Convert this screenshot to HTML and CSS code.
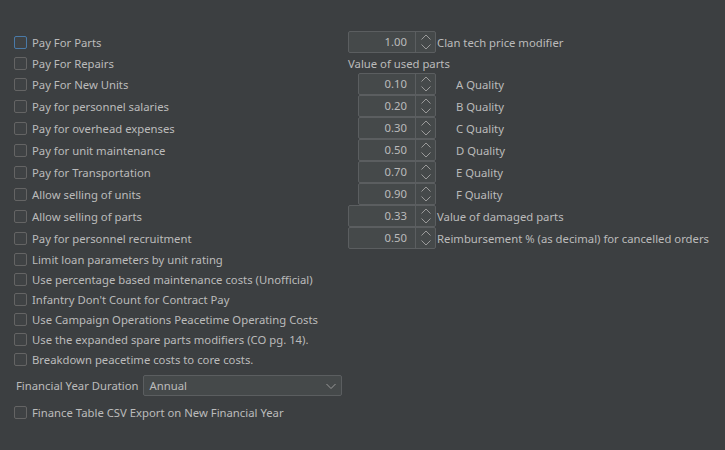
FILE: index.html
```html
<!DOCTYPE html>
<html>
<head>
<meta charset="utf-8">
<link rel="stylesheet" href="styles.css">
</head>
<body>
<div class="panel">
  <div class="grid">
    <label class="check"><span class="box focus"></span>Pay For Parts</label>
    <div class="spin main"><span class="val">1.00</span><span class="btn"><svg width="20" height="22" viewBox="0 0 20 22"><path d="M5.5 8.5 L10 4 L14.5 8.5 M5.5 13.5 L10 18 L14.5 13.5" fill="none" stroke="#9a9a9a" stroke-width="1"/></svg></span></div>
    <div class="lbl">Clan tech price modifier</div>

    <label class="check"><span class="box"></span>Pay For Repairs</label>
    <div class="lbl section">Value of used parts</div>

    <label class="check"><span class="box"></span>Pay For New Units</label>
    <div class="spin sub"><span class="val">0.10</span><span class="btn"><svg width="20" height="22" viewBox="0 0 20 22"><path d="M5.5 8.5 L10 4 L14.5 8.5 M5.5 13.5 L10 18 L14.5 13.5" fill="none" stroke="#9a9a9a" stroke-width="1"/></svg></span></div>
    <div class="lbl q">A Quality</div>

    <label class="check"><span class="box"></span>Pay for personnel salaries</label>
    <div class="spin sub"><span class="val">0.20</span><span class="btn"><svg width="20" height="22" viewBox="0 0 20 22"><path d="M5.5 8.5 L10 4 L14.5 8.5 M5.5 13.5 L10 18 L14.5 13.5" fill="none" stroke="#9a9a9a" stroke-width="1"/></svg></span></div>
    <div class="lbl q">B Quality</div>

    <label class="check"><span class="box"></span>Pay for overhead expenses</label>
    <div class="spin sub"><span class="val">0.30</span><span class="btn"><svg width="20" height="22" viewBox="0 0 20 22"><path d="M5.5 8.5 L10 4 L14.5 8.5 M5.5 13.5 L10 18 L14.5 13.5" fill="none" stroke="#9a9a9a" stroke-width="1"/></svg></span></div>
    <div class="lbl q">C Quality</div>

    <label class="check"><span class="box"></span>Pay for unit maintenance</label>
    <div class="spin sub"><span class="val">0.50</span><span class="btn"><svg width="20" height="22" viewBox="0 0 20 22"><path d="M5.5 8.5 L10 4 L14.5 8.5 M5.5 13.5 L10 18 L14.5 13.5" fill="none" stroke="#9a9a9a" stroke-width="1"/></svg></span></div>
    <div class="lbl q">D Quality</div>

    <label class="check"><span class="box"></span>Pay for Transportation</label>
    <div class="spin sub"><span class="val">0.70</span><span class="btn"><svg width="20" height="22" viewBox="0 0 20 22"><path d="M5.5 8.5 L10 4 L14.5 8.5 M5.5 13.5 L10 18 L14.5 13.5" fill="none" stroke="#9a9a9a" stroke-width="1"/></svg></span></div>
    <div class="lbl q">E Quality</div>

    <label class="check"><span class="box"></span>Allow selling of units</label>
    <div class="spin sub"><span class="val">0.90</span><span class="btn"><svg width="20" height="22" viewBox="0 0 20 22"><path d="M5.5 8.5 L10 4 L14.5 8.5 M5.5 13.5 L10 18 L14.5 13.5" fill="none" stroke="#9a9a9a" stroke-width="1"/></svg></span></div>
    <div class="lbl q">F Quality</div>

    <label class="check"><span class="box"></span>Allow selling of parts</label>
    <div class="spin main"><span class="val">0.33</span><span class="btn"><svg width="20" height="22" viewBox="0 0 20 22"><path d="M5.5 8.5 L10 4 L14.5 8.5 M5.5 13.5 L10 18 L14.5 13.5" fill="none" stroke="#9a9a9a" stroke-width="1"/></svg></span></div>
    <div class="lbl">Value of damaged parts</div>

    <label class="check"><span class="box"></span>Pay for personnel recruitment</label>
    <div class="spin main"><span class="val">0.50</span><span class="btn"><svg width="20" height="22" viewBox="0 0 20 22"><path d="M5.5 8.5 L10 4 L14.5 8.5 M5.5 13.5 L10 18 L14.5 13.5" fill="none" stroke="#9a9a9a" stroke-width="1"/></svg></span></div>
    <div class="lbl">Reimbursement % (as decimal) for cancelled orders</div>

    <label class="check full"><span class="box"></span>Limit loan parameters by unit rating</label>
    <label class="check full"><span class="box"></span>Use percentage based maintenance costs (Unofficial)</label>
    <label class="check full"><span class="box"></span>Infantry Don't Count for Contract Pay</label>
    <label class="check full"><span class="box"></span>Use Campaign Operations Peacetime Operating Costs</label>
    <label class="check full"><span class="box"></span>Use the expanded spare parts modifiers (CO pg. 14).</label>
    <label class="check full"><span class="box"></span>Breakdown peacetime costs to core costs.</label>

    <div class="combo-row">
      <span class="combo-label">Financial Year Duration</span>
      <div class="combo"><span>Annual</span><svg width="12" height="8" viewBox="0 0 12 8"><path d="M1.5 2 L6 6.5 L10.5 2" fill="none" stroke="#9a9a9a" stroke-width="1"/></svg></div>
    </div>

    <label class="check full last"><span class="box"></span>Finance Table CSV Export on New Financial Year</label>
  </div>
</div>
</body>
</html>
```

FILE: styles.css
```css
html, body {
  margin: 0;
  padding: 0;
  background: #3c3f41;
}
body {
  width: 725px;
  height: 450px;
  overflow: hidden;
  font-family: "Noto Sans", "Open Sans", sans-serif;
  font-size: 11.3px;
  color: #bbbbbb;
}
.panel {
  padding: 31px 0 0 14px;
}
.grid {
  display: grid;
  grid-template-columns: 334px 88px auto;
  grid-template-rows: 22px 20px repeat(8, 22px) repeat(6, 20px) 27px 26px;
  align-items: center;
}
.check {
  grid-column: 1;
  display: flex;
  align-items: center;
  gap: 5px;
  height: 20px;
  white-space: nowrap;
}
.check.full { grid-column: 1 / 4; }
.box {
  width: 11px;
  height: 11px;
  border: 1px solid #646464;
  border-radius: 2px;
  background: #3f4244;
  flex: none;
}
.box.focus { border-color: #4a7aa8; }
.spin {
  grid-column: 2;
  display: flex;
  height: 22px;
  box-sizing: border-box;
  border: 1px solid #5b5e60;
  border-radius: 2px;
  background: #45494a;
}
.spin.sub {
  margin-left: 10px;
}
.spin .val {
  flex: 1;
  text-align: right;
  padding-right: 8px;
  line-height: 20px;
  border-right: 1px solid #5b5e60;
}
.spin .btn {
  width: 19px;
  height: 20px;
  display: flex;
  align-items: center;
  justify-content: center;
  overflow: hidden;
}
.spin .btn svg { flex: none; }
.lbl {
  grid-column: 3;
  padding-left: 1px;
  white-space: nowrap;
}
.lbl.q { padding-left: 20px; }
.lbl.section { grid-column: 2 / 4; padding-left: 0; }
.combo-row {
  grid-column: 1 / 4;
  display: flex;
  align-items: center;
  gap: 4px;
  padding-left: 2px;
  height: 21px;
  align-self: end;
  white-space: nowrap;
}
.combo {
  width: 199px;
  height: 21px;
  box-sizing: border-box;
  border: 1px solid #5b5e60;
  border-radius: 2px;
  background: #45494a;
  display: flex;
  align-items: center;
  justify-content: space-between;
  padding: 0 4px 0 6px;
}
.check.last { align-self: end; }
```
